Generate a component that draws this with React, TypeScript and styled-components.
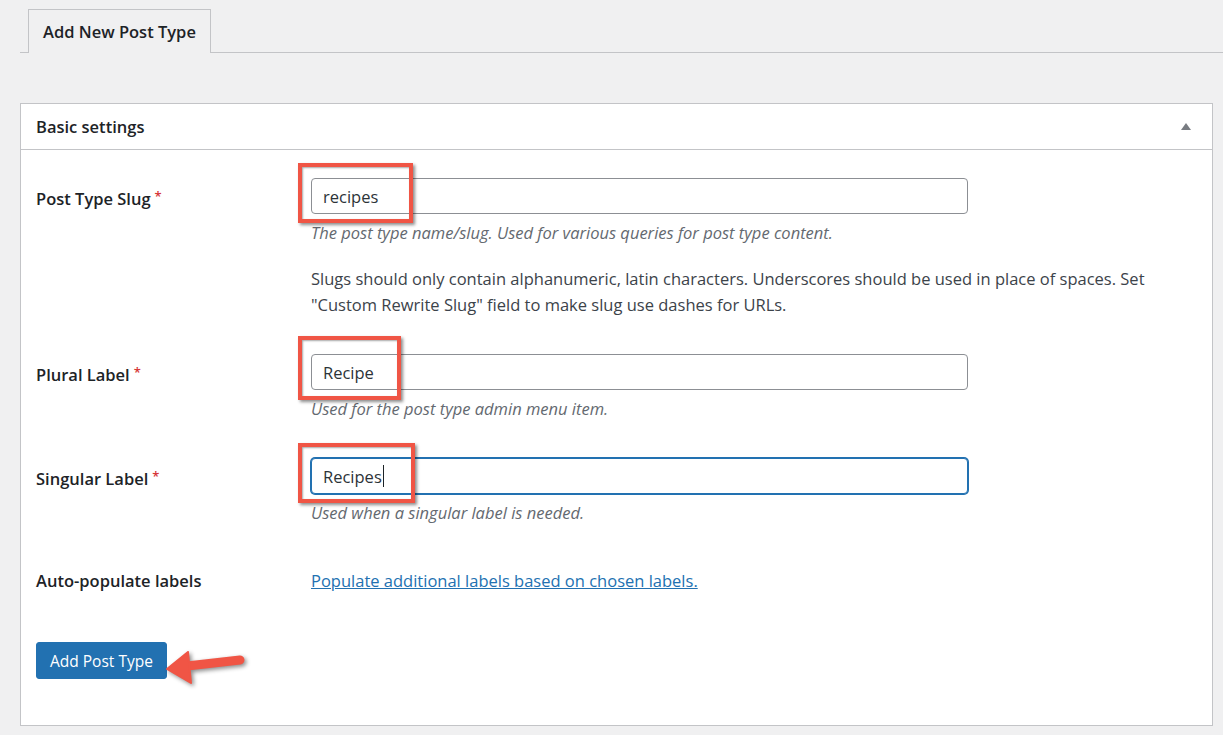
import styled, { createGlobalStyle, css } from 'styled-components';

const GlobalStyle = createGlobalStyle`
  html, body {
    margin: 0;
    padding: 0;
    background: #f0f0f1;
  }
  body {
    font-family: 'Open Sans', 'Noto Sans', sans-serif;
    font-size: 16.5px;
    color: #1d2327;
  }
`;

const Page = styled.div`
  padding-top: 9px;
  min-height: 735px;
  box-sizing: border-box;
`;

const TabNav = styled.div`
  margin-left: 20px;
  border-bottom: 1px solid #c3c4c7;
  display: flex;
  padding-left: 8px;
`;

const Tab = styled.div`
  height: 43px;
  padding: 0 14px;
  border: 1px solid #c3c4c7;
  border-bottom: none;
  margin-bottom: -1px;
  background: #f0f0f1;
  display: flex;
  align-items: center;
  font-weight: 600;
  font-size: 16.5px;
  color: #1d2327;
`;

const Panel = styled.div`
  margin: 50px 10px 0 20px;
  background: #fff;
  border: 1px solid #c3c4c7;
`;

const PanelHeader = styled.div`
  height: 45px;
  border-bottom: 1px solid #c3c4c7;
  display: flex;
  align-items: center;
  justify-content: space-between;
  padding: 0 16px 0 15px;
`;

const PanelTitle = styled.h2`
  margin: 0;
  font-size: 16.5px;
  font-weight: 600;
  color: #1d2327;
`;

const Toggle = styled.span`
  width: 0;
  height: 0;
  border-left: 5px solid transparent;
  border-right: 5px solid transparent;
  border-bottom: 7px solid #787c82;
  margin-right: 5px;
`;

const PanelBody = styled.div`
  padding: 10px 15px 46px;
`;

const Row = styled.div`
  display: grid;
  grid-template-columns: 275px 657px;
  padding: 18px 0;
`;

const Label = styled.div<{ $offset?: number }>`
  font-weight: 600;
  font-size: 16.5px;
  line-height: 26px;
  padding-top: ${(p) => p.$offset ?? 8}px;
  color: #1d2327;
`;

const Required = styled.span`
  color: #d63638;
  font-size: 13px;
  vertical-align: top;
  margin-left: 4px;
  position: relative;
  top: -3px;
`;

const Field = styled.div`
  position: relative;
`;

const TextBox = styled.div<{ $focused?: boolean }>`
  height: 36px;
  box-sizing: border-box;
  border: 1px solid #8c8f94;
  border-radius: 4px;
  padding: 0 11px;
  display: flex;
  align-items: center;
  font-size: 16.5px;
  color: #2c3338;
  background: #fff;
  ${(p) =>
    p.$focused &&
    css`
      border-color: #2271b1;
      box-shadow: 0 0 0 1px #2271b1;
    `}
`;

const Caret = styled.span`
  display: inline-block;
  width: 1px;
  height: 22px;
  background: #1d2327;
  margin-left: 1px;
`;

const Description = styled.p`
  margin: 6px 0 0;
  font-style: italic;
  line-height: 26px;
  color: #646970;
`;

const Note = styled.p`
  margin: 20px 0 0;
  line-height: 26px;
  color: #3c434a;
  width: 850px;
`;

const Link = styled.a`
  display: inline-block;
  padding-top: 6px;
  line-height: 26px;
  font-size: 16.5px;
  color: #2271b1;
  text-decoration: underline;
  cursor: pointer;
`;

const Submit = styled.div`
  position: relative;
  margin-top: 30px;
  display: flex;
`;

const Button = styled.button`
  height: 37px;
  padding: 0 13px;
  background: #2271b1;
  border: 1px solid #2271b1;
  border-radius: 3px;
  color: #fff;
  font-family: inherit;
  font-size: 15.5px;
  cursor: pointer;
`;

const Highlight = styled.div<{ $top: number; $w: number; $h: number }>`
  position: absolute;
  left: -13px;
  top: ${(p) => p.$top}px;
  width: ${(p) => p.$w}px;
  height: ${(p) => p.$h}px;
  box-sizing: border-box;
  border: 4px solid #f05545;
  box-shadow: 2px 2px 3px rgba(0, 0, 0, 0.45), inset 1px 1px 2px rgba(0, 0, 0, 0.35);
  pointer-events: none;
`;

const ArrowMark = styled.svg`
  position: absolute;
  left: 124px;
  top: 3px;
  overflow: visible;
  filter: drop-shadow(2px 2px 2px rgba(0, 0, 0, 0.45));
`;

const Arrow = () => (
  <ArrowMark width="90" height="42" viewBox="0 0 90 42">
    <line x1="27" y1="21" x2="80" y2="15" stroke="#f05545" strokeWidth="9" strokeLinecap="round" />
    <polygon points="7,24 28,7 31,38" fill="#f05545" strokeLinejoin="round" stroke="#f05545" strokeWidth="2" />
  </ArrowMark>
);

export default function App() {
  return (
    <>
      <GlobalStyle />
      <Page>
        <TabNav>
          <Tab>Add New Post Type</Tab>
        </TabNav>
        <Panel>
          <PanelHeader>
            <PanelTitle>Basic settings</PanelTitle>
            <Toggle />
          </PanelHeader>
          <PanelBody>
            <Row>
              <Label $offset={8}>
                Post Type Slug<Required>*</Required>
              </Label>
              <Field>
                <TextBox>recipes</TextBox>
                <Highlight $top={-15} $w={115} $h={60} />
                <Description>The post type name/slug. Used for various queries for post type content.</Description>
                <Note>
                  Slugs should only contain alphanumeric, latin characters. Underscores should be used in place of
                  spaces. Set "Custom Rewrite Slug" field to make slug use dashes for URLs.
                </Note>
              </Field>
            </Row>
            <Row>
              <Label $offset={8}>
                Plural Label<Required>*</Required>
              </Label>
              <Field>
                <TextBox>Recipe</TextBox>
                <Highlight $top={-18} $w={103} $h={64} />
                <Description>Used for the post type admin menu item.</Description>
              </Field>
            </Row>
            <Row>
              <Label $offset={8}>
                Singular Label<Required>*</Required>
              </Label>
              <Field>
                <TextBox $focused>
                  Recipes
                  <Caret />
                </TextBox>
                <Highlight $top={-15} $w={117} $h={60} />
                <Description>Used when a singular label is needed.</Description>
              </Field>
            </Row>
            <Row>
              <Label $offset={6}>Auto-populate labels</Label>
              <Field>
                <Link>Populate additional labels based on chosen labels.</Link>
              </Field>
            </Row>
            <Submit>
              <Button>Add Post Type</Button>
              <Arrow />
            </Submit>
          </PanelBody>
        </Panel>
      </Page>
    </>
  );
}
